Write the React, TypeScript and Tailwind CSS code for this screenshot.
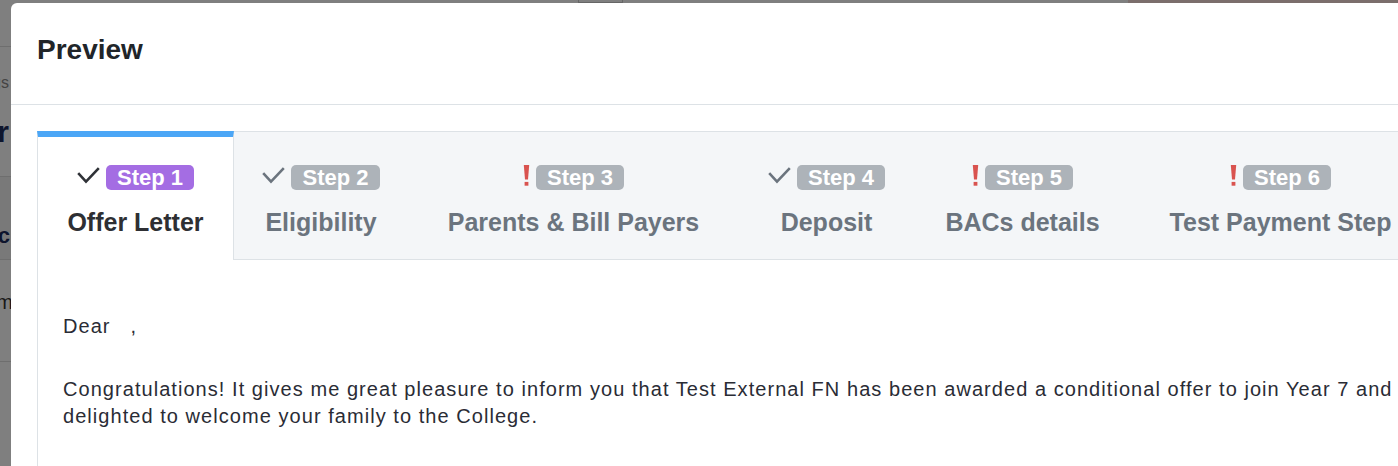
import React from 'react'

type Step = {
  n: number
  label: string
  done: boolean
  width: string
  active?: boolean
}

const steps: Step[] = [
  { n: 1, label: 'Offer Letter', done: true, width: 'w-[197px]', active: true },
  { n: 2, label: 'Eligibility', done: true, width: 'w-[174px]' },
  { n: 3, label: 'Parents & Bill Payers', done: false, width: 'w-[331px]' },
  { n: 4, label: 'Deposit', done: true, width: 'w-[175px]' },
  { n: 5, label: 'BACs details', done: false, width: 'w-[217px]' },
  { n: 6, label: 'Test Payment Step', done: false, width: 'w-[299px]' }
]

const CheckMark = ({ active }: { active?: boolean }) => (
  <svg width="23" height="17" viewBox="0 0 23 17" className="mt-[2px] shrink-0">
    <polyline
      points="1.2,6.2 9,14.6 21.8,1.2"
      fill="none"
      stroke={active ? '#2f3237' : '#6b747e'}
      strokeWidth="2.6"
    />
  </svg>
)

const Warning = () => (
  <svg width="7" height="21" viewBox="0 0 7 21" className="shrink-0">
    <path d="M0.8 0 H6.2 L5 14.6 H2 Z" fill="#d9534f" />
    <rect x="1.6" y="16.9" width="3.8" height="3.8" fill="#d9534f" />
  </svg>
)

const StepTab = ({ step }: { step: Step }) => {
  const shell = step.active
    ? 'border-t-[6px] border-l border-r border-t-[#4ba6f6] border-l-[#dde2e6] border-r-[#dde2e6] bg-white pt-[28px]'
    : 'border-t border-b border-[#dde2e6] bg-[#f4f6f8] pt-[33px]'

  return (
    <div className={`${step.width} ${shell} flex shrink-0 flex-col items-center`}>
      <div className="flex h-[25px] items-start gap-[6px]">
        {step.done ? <CheckMark active={step.active} /> : <Warning />}
        <span
          className={`${
            step.active ? 'bg-[#a46de3]' : 'bg-[#adb3b9]'
          } rounded-[5px] px-[11px] text-[22px] font-bold leading-[25px] text-white`}
        >
          Step {step.n}
        </span>
      </div>
      <div
        className={`${
          step.active ? 'text-[#2e2f33]' : 'text-[#6b747e]'
        } mt-[17px] whitespace-nowrap text-[25px] font-bold leading-[30px]`}
      >
        {step.label}
      </div>
    </div>
  )
}

// the page that sits dimmed behind the modal
const BehindPage = () => (
  <div className="flex h-full flex-col bg-white">
    <div className="-mt-[25px] flex h-[28px] shrink-0 items-end">
      <span className="-ml-[40px] whitespace-nowrap text-[26px] font-bold leading-[28px] text-[#1c2a5a]">
        Admissions Year 2023/24
      </span>
      <span className="ml-[40px] text-[18px] leading-[28px] text-[#333]">▾</span>
      <span className="ml-[24px] whitespace-nowrap text-[26px] leading-[28px] text-[#777]">
        ☰ Submitted Date
      </span>
      <span className="ml-[25px] h-[28px] w-[45px] border border-[#ccc]" />
      <span className="ml-auto mr-[-60px] flex h-[28px] w-[330px] items-end bg-[#f6dcd8] pl-[20px] text-[26px] leading-[28px] whitespace-nowrap text-[#a3281c]">
        Referrals: Lead Gen Auto
      </span>
    </div>
    <div className="-ml-[189px] flex w-[200px] flex-1 flex-col text-right">
      <div className="h-[44px] border-b border-[#ddd]" />
      <div className="h-[130px] border-b border-[#ddd] pr-[2px]">
        <div className="mt-[26px] text-[16px] leading-[20px] text-[#888]">Settings</div>
        <div className="mt-[22px] text-[30px] font-bold leading-[34px] text-[#1c2a5a]">Order</div>
      </div>
      <div className="h-[83px] border-b border-[#ddd] bg-[#f2f2f2]">
        <div className="mt-[46px] pr-[1px] text-[22px] font-bold leading-[26px] text-[#1c2a5a]">Doc</div>
      </div>
      <div className="h-[102px] border-b border-[#ddd]">
        <div className="mt-[30px] -mr-[2px] text-[20px] leading-[24px] text-[#333]">Form</div>
      </div>
    </div>
  </div>
)

export default function App() {
  return (
    <div className="relative h-[466px] w-[1398px] overflow-hidden font-['Liberation_Sans',Arial,sans-serif]">
      <BehindPage />
      <div className="absolute inset-0 bg-black/50" />

      <div className="absolute left-[11px] top-[3px] h-[520px] w-[1600px] rounded-tl-[6px] bg-white">
        <div className="h-[102px] border-b border-[#dde2e6] pl-[26px] pt-[31px]">
          <h2 className="text-[28px] font-bold leading-[32px] text-[#212529]">Preview</h2>
        </div>

        <div className="pl-[26px] pt-[26px]">
          <div className="flex h-[129px]">
            {steps.map((s) => (
              <StepTab key={`step-tab-${s.n}`} step={s} />
            ))}
            <div className="flex-1 border-t border-b border-[#dde2e6] bg-[#f4f6f8]" />
          </div>

          <div className="h-[300px] border-l border-[#dde2e6] pl-[25px] pt-[53px] text-[20px] leading-[27px] tracking-[1.05px] text-[#2a2c35]">
            <p className="mb-[36px]">
              Dear<span className="inline-block w-[20px]" />,
            </p>
            <p className="whitespace-nowrap">
              Congratulations! It gives me great pleasure to inform you that Test External FN has been
              awarded a conditional offer to join Year 7 and we are
              <br />
              delighted to welcome your family to the College.
            </p>
          </div>
        </div>
      </div>
    </div>
  )
}
